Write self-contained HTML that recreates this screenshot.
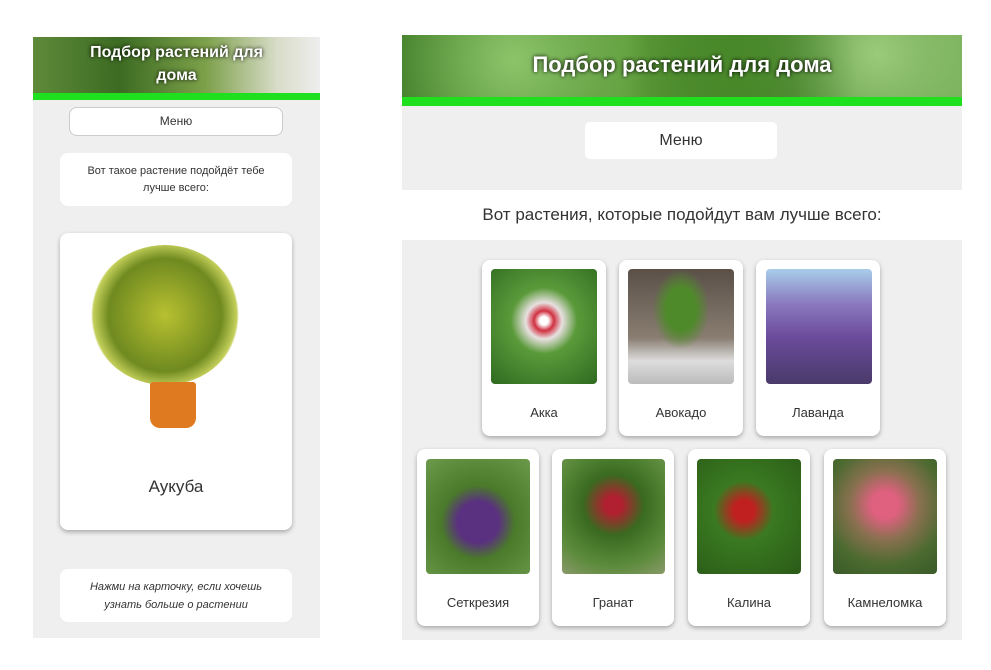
<!DOCTYPE html>
<html><head><meta charset="utf-8"><style>
*{margin:0;padding:0;box-sizing:border-box}
body{width:991px;height:670px;background:#fff;position:relative;font-family:"Liberation Sans","DejaVu Sans",sans-serif;color:#333;overflow:hidden}
.a{position:absolute}
.hdr{background:linear-gradient(90deg,#5f8a3a,#3c6b22 30%,#7ca04a 60%,#d8dcc8 85%,#eee);}
.hdr2{background:radial-gradient(circle at 20% 40%,#8cc46a,transparent 30%),radial-gradient(circle at 60% 60%,#4a8a2a,transparent 35%),radial-gradient(circle at 85% 30%,#9acb7a,transparent 30%),linear-gradient(90deg,#3d7a25,#5f9d3c 40%,#346d1e 70%,#6ea850);}
.ht{color:#fff;font-weight:bold;text-align:center;text-shadow:0 0 4px #000}
.wb{background:#fff;border-radius:8px;text-align:center}
.card{background:#fff;border-radius:8px;box-shadow:0 2px 5px rgba(0,0,0,.3);text-align:center;font-size:13px}
.im{position:absolute;border-radius:4px}
.lbl{position:absolute;left:0;right:0;font-size:13px;color:#333}
</style></head><body>
<!-- left panel -->
<div class="a" style="left:33px;top:37px;width:287px;height:601px;background:#efefef"></div>
<div class="a hdr" style="left:33px;top:37px;width:287px;height:56px"></div>
<div class="a ht" style="left:33px;top:41px;width:287px;font-size:16px;line-height:23px">Подбор растений для<br>дома</div>
<div class="a" style="left:33px;top:93px;width:287px;height:7px;background:#1ee01e"></div>
<div class="a wb" style="left:69px;top:107px;width:214px;height:29px;border:1px solid #ccc;font-size:12px;line-height:27px">Меню</div>
<div class="a wb" style="left:60px;top:153px;width:232px;height:53px;font-size:11px;line-height:17px;padding-top:10px">Вот такое растение подойдёт тебе<br>лучше всего:</div>
<div class="a card" style="left:60px;top:233px;width:232px;height:297px"></div>
<div class="a" style="left:90px;top:245px;width:150px;height:140px;border-radius:50%;background:radial-gradient(circle,#b8c030,#6f8a20 55%,#c4cf5a 70%,transparent 72%)"></div>
<div class="a" style="left:150px;top:382px;width:46px;height:46px;background:#e07a20;border-radius:3px 3px 10px 10px"></div>
<div class="a" style="left:60px;top:477px;width:232px;text-align:center;font-size:17px">Аукуба</div>
<div class="a wb" style="left:60px;top:569px;width:232px;height:53px;font-size:11px;line-height:18px;padding-top:9px;font-style:italic">Нажми на карточку, если хочешь<br>узнать больше о растении</div>

<!-- right panel -->
<div class="a" style="left:402px;top:35px;width:560px;height:605px;background:#efefef"></div>
<div class="a hdr2" style="left:402px;top:35px;width:560px;height:62px"></div>
<div class="a ht" style="left:402px;top:52px;width:560px;font-size:22px">Подбор растений для дома</div>
<div class="a" style="left:402px;top:97px;width:560px;height:9px;background:#1ee01e"></div>
<div class="a wb" style="left:585px;top:122px;width:192px;height:37px;font-size:16px;line-height:37px;border-radius:5px">Меню</div>
<div class="a" style="left:402px;top:190px;width:560px;height:50px;background:#fff;text-align:center;font-size:17px;line-height:50px">Вот растения, которые подойдут вам лучше всего:</div>

<div class="a card" style="left:482px;top:260px;width:124px;height:176px"><div class="im" style="left:9px;top:9px;width:106px;height:115px;background:radial-gradient(circle at 50% 45%,#fff 5%,#d03040 12%,#e8e0e0 22%,#5a9a3a 40%,#2f6a20)"></div><div class="lbl" style="top:145px">Акка</div></div>
<div class="a card" style="left:619px;top:260px;width:124px;height:176px"><div class="im" style="left:9px;top:9px;width:106px;height:115px;background:radial-gradient(ellipse at 50% 35%,#4f8a2a 20%,transparent 38%),linear-gradient(180deg,#5a5048,#8a7e72 60%,#ddd 80%,#bbb)"></div><div class="lbl" style="top:145px">Авокадо</div></div>
<div class="a card" style="left:756px;top:260px;width:124px;height:176px"><div class="im" style="left:10px;top:9px;width:106px;height:115px;background:linear-gradient(180deg,#a8cdea,#8a7ac0 30%,#6a4a9a 60%,#4a3a6a)"></div><div class="lbl" style="top:145px">Лаванда</div></div>

<div class="a card" style="left:417px;top:449px;width:122px;height:177px"><div class="im" style="left:9px;top:10px;width:104px;height:115px;background:radial-gradient(circle at 50% 55%,#5a3080 25%,#4a7a2a 45%,#6a9a4a)"></div><div class="lbl" style="top:146px">Сеткрезия</div></div>
<div class="a card" style="left:552px;top:449px;width:122px;height:177px"><div class="im" style="left:10px;top:10px;width:103px;height:115px;background:radial-gradient(circle at 50% 40%,#b02030 10%,#3a6a20 35%,#5a8a3a 70%,#8a9a6a)"></div><div class="lbl" style="top:146px">Гранат</div></div>
<div class="a card" style="left:688px;top:449px;width:122px;height:177px"><div class="im" style="left:9px;top:10px;width:104px;height:115px;background:radial-gradient(circle at 45% 45%,#c02020 12%,#3a7a20 35%,#2a5a18)"></div><div class="lbl" style="top:146px">Калина</div></div>
<div class="a card" style="left:824px;top:449px;width:122px;height:177px"><div class="im" style="left:9px;top:10px;width:104px;height:115px;background:radial-gradient(circle at 50% 40%,#e06080 15%,#8a7050 40%,#4a6a30 70%,#3a5a28)"></div><div class="lbl" style="top:146px">Камнеломка</div></div>
</body></html>
